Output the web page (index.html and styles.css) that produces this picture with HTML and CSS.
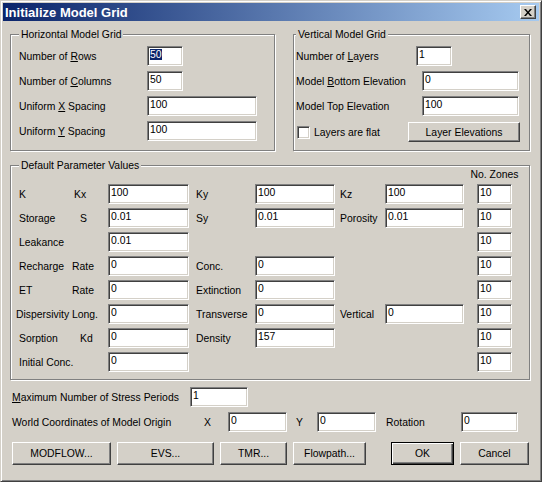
FILE: index.html
```html
<!DOCTYPE html>
<html lang="en">
<head>
    <meta charset="UTF-8">
    <title>Initialize Model Grid</title>
    <link rel="stylesheet" href="styles.css">
</head>
<body>
    <div class="window">
        <div class="titlebar">
            <span class="title">Initialize Model Grid</span>
            <span class="close-btn">
                <svg width="8" height="7" viewBox="0 0 8 7"><path d="M0 0h2l2 2.5L6 0h2L5 3.5 8 7H6L4 4.5 2 7H0l3-3.5z" fill="#000"/></svg>
            </span>
        </div>

        <div class="content">
            <div class="top-row">
                <!-- Horizontal grid -->
                <fieldset class="group horiz">
                    <legend>Horizontal Model Grid</legend>
                    <div class="rows">
                        <div class="row">
                            <span class="lbl w128">Number of <u>R</u>ows</span>
                            <span class="edit w36"><span class="sel">50</span></span>
                        </div>
                        <div class="row">
                            <span class="lbl w128">Number of <u>C</u>olumns</span>
                            <span class="edit w36">50</span>
                        </div>
                        <div class="row">
                            <span class="lbl w128">Uniform <u>X</u> Spacing</span>
                            <span class="edit w110">100</span>
                        </div>
                        <div class="row">
                            <span class="lbl w128">Uniform <u>Y</u> Spacing</span>
                            <span class="edit w110">100</span>
                        </div>
                    </div>
                </fieldset>

                <!-- Vertical grid -->
                <fieldset class="group vert">
                    <legend>Vertical Model Grid</legend>
                    <div class="rows">
                        <div class="row">
                            <span class="lbl w120">Number of <u>L</u>ayers</span>
                            <span class="edit w36">1</span>
                        </div>
                        <div class="row">
                            <span class="lbl w126">Model <u>B</u>ottom Elevation</span>
                            <span class="edit w97">0</span>
                        </div>
                        <div class="row">
                            <span class="lbl w126">Model Top Elevation</span>
                            <span class="edit w97">100</span>
                        </div>
                        <div class="row check-row">
                            <span class="check"></span>
                            <span class="check-label">Layers are flat</span>
                            <button class="btn btn-layers">Layer Elevations</button>
                        </div>
                    </div>
                </fieldset>
            </div>

            <!-- Parameters -->
            <fieldset class="group params">
                <legend>Default Parameter Values</legend>
                <div class="param-grid">
                    <span></span><span></span><span></span><span></span><span></span><span></span><span></span>
                    <span class="zones-head">No. Zones</span>

                    <span class="cell"><span class="l1">K</span><span class="l2 m2">Kx</span></span>
                    <span class="edit">100</span>
                    <span class="cell mid">Ky</span>
                    <span class="edit">100</span>
                    <span class="cell right">Kz</span>
                    <span class="edit">100</span>
                    <span></span>
                    <span class="edit">10</span>

                    <span class="cell"><span class="l1">Storage</span><span class="l2 m8">S</span></span>
                    <span class="edit">0.01</span>
                    <span class="cell mid">Sy</span>
                    <span class="edit">0.01</span>
                    <span class="cell right">Porosity</span>
                    <span class="edit">0.01</span>
                    <span></span>
                    <span class="edit">10</span>

                    <span class="cell"><span class="l1">Leakance</span></span>
                    <span class="edit">0.01</span>
                    <span></span><span></span><span></span><span></span><span></span>
                    <span class="edit">10</span>

                    <span class="cell"><span class="l1">Recharge</span><span class="l2">Rate</span></span>
                    <span class="edit">0</span>
                    <span class="cell mid">Conc.</span>
                    <span class="edit">0</span>
                    <span></span><span></span><span></span>
                    <span class="edit">10</span>

                    <span class="cell"><span class="l1">ET</span><span class="l2">Rate</span></span>
                    <span class="edit">0</span>
                    <span class="cell mid">Extinction</span>
                    <span class="edit">0</span>
                    <span></span><span></span><span></span>
                    <span class="edit">10</span>

                    <span class="cell"><span class="l1 tight">Dispersivity</span><span class="l2">Long.</span></span>
                    <span class="edit">0</span>
                    <span class="cell mid">Transverse</span>
                    <span class="edit">0</span>
                    <span class="cell right">Vertical</span>
                    <span class="edit">0</span>
                    <span></span>
                    <span class="edit">10</span>

                    <span class="cell"><span class="l1">Sorption</span><span class="l2 m8">Kd</span></span>
                    <span class="edit">0</span>
                    <span class="cell mid">Density</span>
                    <span class="edit">157</span>
                    <span></span><span></span><span></span>
                    <span class="edit">10</span>

                    <span class="cell"><span class="l1">Initial Conc.</span></span>
                    <span class="edit">0</span>
                    <span></span><span></span><span></span><span></span><span></span>
                    <span class="edit">10</span>
                </div>
            </fieldset>

            <div class="line line-max">
                <span class="lbl w178"><u>M</u>aximum Number of Stress Periods</span>
                <span class="edit w58">1</span>
            </div>

            <div class="line line-origin">
                <span class="lbl w178">World Coordinates of Model Origin</span>
                <span class="lbl coord-x">X</span>
                <span class="edit w59">0</span>
                <span class="lbl coord-y">Y</span>
                <span class="edit w59">0</span>
                <span class="lbl coord-rot">Rotation</span>
                <span class="edit w57">0</span>
            </div>

            <div class="buttons">
                <button class="btn btn-modflow">MODFLOW...</button>
                <button class="btn btn-evs">EVS...</button>
                <button class="btn btn-tmr">TMR...</button>
                <button class="btn btn-flowpath">Flowpath...</button>
                <button class="btn btn-ok default">OK</button>
                <button class="btn btn-cancel">Cancel</button>
            </div>
        </div>
    </div>
</body>
</html>
```

FILE: styles.css
```css
* {
    box-sizing: border-box;
}

body {
    margin: 0;
    font-family: 'Liberation Sans', Arial, sans-serif;
    font-size: 10.4px;
    color: #000;
    background: #d4d0c8;
}

u {
    text-decoration: underline;
    text-underline-offset: 1px;
}

.window {
    width: 542px;
    height: 482px;
    background: #d4d0c8;
    border: 1px solid;
    border-color: #d4d0c8 #404040 #404040 #d4d0c8;
    box-shadow: inset 1px 1px #fff, inset -1px -1px #808080;
    padding: 2px;
}

/* title bar */
.titlebar {
    height: 18px;
    display: flex;
    align-items: center;
    justify-content: space-between;
    padding: 0 3px 0 2px;
    background: linear-gradient(to right, #0a246a, #a6caf0);
}

.title {
    color: #fff;
    font-weight: bold;
    font-size: 13px;
}

.close-btn {
    width: 16px;
    height: 14px;
    display: flex;
    align-items: center;
    justify-content: center;
    background: #d4d0c8;
    border: 1px solid;
    border-color: #fff #404040 #404040 #fff;
    box-shadow: inset -1px -1px #808080;
}

.content {
    padding: 7px 9px 0 7px;
}

/* group boxes */
.top-row {
    display: flex;
    gap: 18px;
}

.group {
    margin: 0;
    min-width: 0;
    border: 1px solid #808080;
    box-shadow: inset 1px 1px #fff, 1px 1px #fff;
}

.group legend {
    padding: 0 2px;
    line-height: 13px;
    background: #d4d0c8;
}

.horiz {
    width: 265px;
    padding: 5px 8px 8px 8px;
}

.vert {
    flex: 1;
    padding: 5px 9px 8px 2px;
}

.rows {
    display: flex;
    flex-direction: column;
    gap: 5px;
}

.row, .line {
    display: flex;
    align-items: center;
    height: 20px;
}

.lbl {
    white-space: nowrap;
    flex-shrink: 0;
}

.w120 { width: 120px; }
.w126 { width: 126px; }
.w128 { width: 128px; }
.w178 { width: 178px; }

/* edit controls */
.edit {
    display: block;
    height: 20px;
    background: #fff;
    border: 1px solid;
    border-color: #808080 #fff #fff #808080;
    box-shadow: inset 1px 1px #404040, inset -1px -1px #d4d0c8;
    padding: 0 2px;
    line-height: 16px;
    white-space: nowrap;
    overflow: hidden;
    flex-shrink: 0;
}

.w36 { width: 36px; }
.w57 { width: 57px; }
.w58 { width: 58px; }
.w59 { width: 59px; }
.w97 { width: 97px; }
.w110 { width: 110px; }

.sel {
    background: #0a246a;
    color: #fff;
}

.check-row {
    margin-top: 1px;
}

.check {
    width: 13px;
    height: 13px;
    margin-left: 1px;
    background: #fff;
    border: 1px solid;
    border-color: #808080 #fff #fff #808080;
    box-shadow: inset 1px 1px #404040, inset -1px -1px #d4d0c8;
}

.check-label {
    margin-left: 4px;
}

/* buttons */
.btn {
    height: 23px;
    padding: 0;
    font: inherit;
    color: #000;
    text-align: center;
    background: #d4d0c8;
    border: 1px solid;
    border-color: #fff #404040 #404040 #fff;
    box-shadow: inset -1px -1px #808080;
}

.btn.default {
    border-color: #000;
    box-shadow: inset 1px 1px #fff, inset -1px -1px #404040, inset -2px -2px #808080;
}

.btn-layers {
    height: 20px;
    width: 112px;
    margin-left: auto;
}

/* parameters */
.params {
    margin-top: 8px;
    padding: 0 8px 7px 8px;
}

.param-grid {
    margin-top: -3px;
    display: grid;
    grid-template-columns: 89px 81px 66px 80px 50px 79px 13px 35px;
    grid-template-rows: 11px repeat(8, 20px);
    row-gap: 4px;
}

.zones-head {
    justify-self: center;
    white-space: nowrap;
    line-height: 11px;
}

.cell {
    display: flex;
    align-items: center;
    white-space: nowrap;
}

.l1 {
    width: 53px;
    flex-shrink: 0;
}

.l1.tight {
    margin-left: -3px;
    width: 56px;
}

.m2 { margin-left: 2px; }
.m8 { margin-left: 8px; }

.mid {
    padding-left: 7px;
}

.right {
    padding-left: 5px;
}

/* bottom section */
.line {
    padding-left: 2px;
}

.line-max {
    margin-top: 7px;
}

.line-origin {
    margin-top: 5px;
}

.coord-x {
    width: 38px;
    padding-left: 14px;
}

.coord-y {
    width: 30px;
    padding-left: 9px;
}

.coord-rot {
    width: 85px;
    padding-left: 10px;
}

.buttons {
    display: flex;
    gap: 6px;
    margin-top: 10px;
    padding-left: 2px;
}

.btn-modflow { width: 99px; }
.btn-evs { width: 97px; }
.btn-tmr { width: 67px; }
.btn-flowpath { width: 73px; }
.btn-ok { width: 63px; margin-left: 19px; }
.btn-cancel { width: 69px; }
```
